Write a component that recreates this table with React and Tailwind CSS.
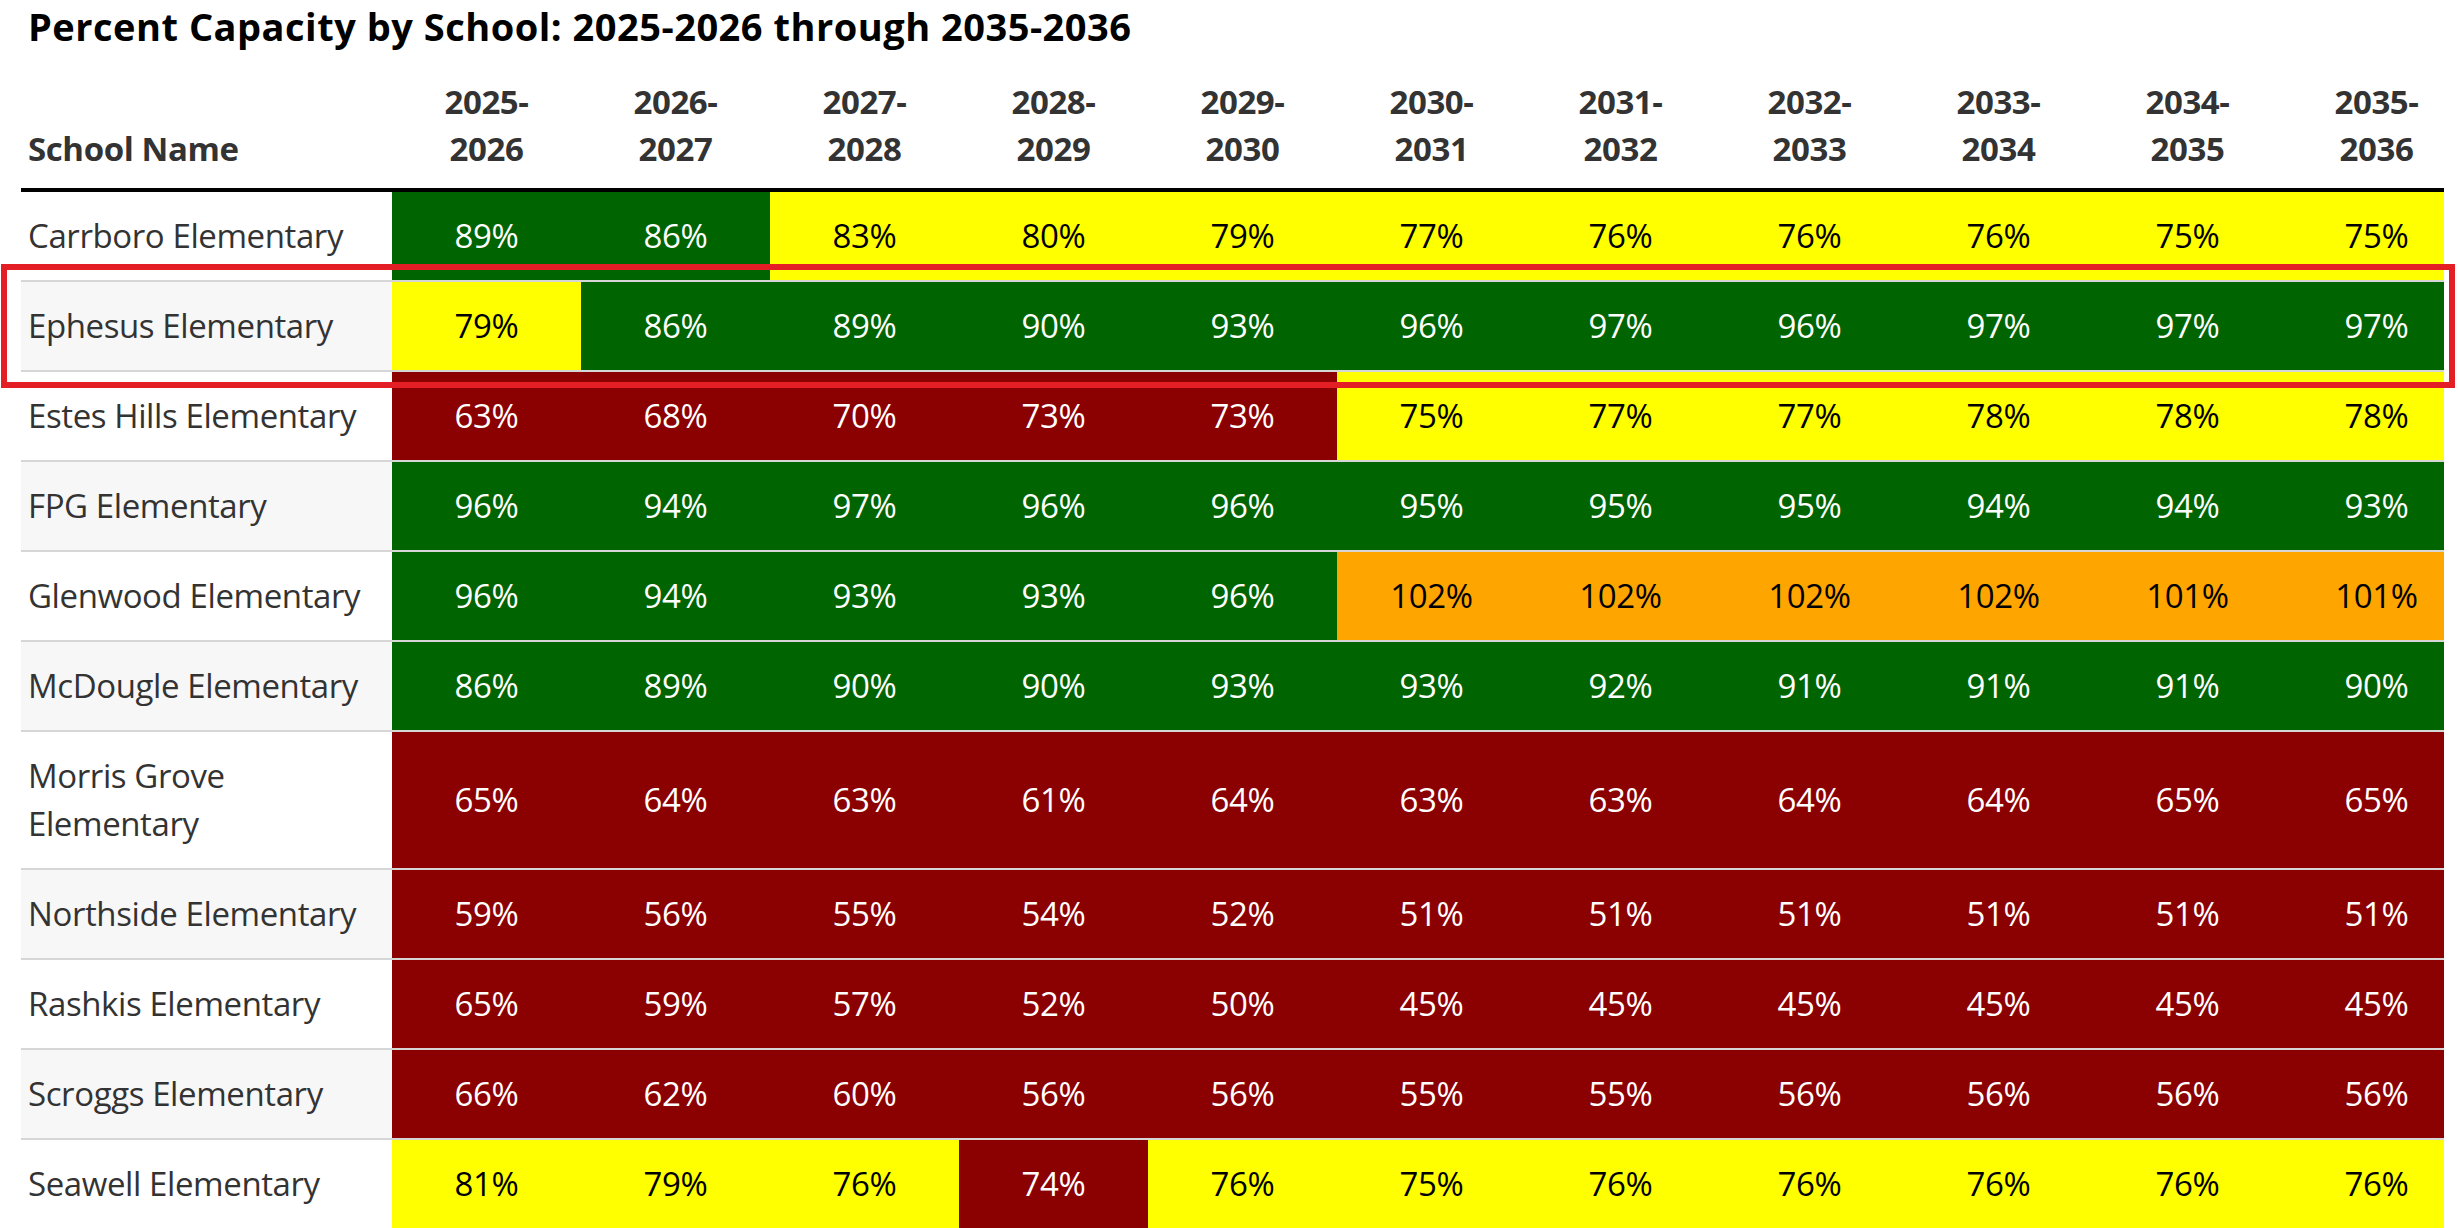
import React from "react";

const years = [
  ["2025-", "2026"],
  ["2026-", "2027"],
  ["2027-", "2028"],
  ["2028-", "2029"],
  ["2029-", "2030"],
  ["2030-", "2031"],
  ["2031-", "2032"],
  ["2032-", "2033"],
  ["2033-", "2034"],
  ["2034-", "2035"],
  ["2035-", "2036"],
];

const schools = [
  { name: "Carrboro Elementary", values: [89, 86, 83, 80, 79, 77, 76, 76, 76, 75, 75] },
  { name: "Ephesus Elementary", values: [79, 86, 89, 90, 93, 96, 97, 96, 97, 97, 97] },
  { name: "Estes Hills Elementary", values: [63, 68, 70, 73, 73, 75, 77, 77, 78, 78, 78] },
  { name: "FPG Elementary", values: [96, 94, 97, 96, 96, 95, 95, 95, 94, 94, 93] },
  { name: "Glenwood Elementary", values: [96, 94, 93, 93, 96, 102, 102, 102, 102, 101, 101] },
  { name: "McDougle Elementary", values: [86, 89, 90, 90, 93, 93, 92, 91, 91, 91, 90] },
  { name: "Morris Grove Elementary", values: [65, 64, 63, 61, 64, 63, 63, 64, 64, 65, 65] },
  { name: "Northside Elementary", values: [59, 56, 55, 54, 52, 51, 51, 51, 51, 51, 51] },
  { name: "Rashkis Elementary", values: [65, 59, 57, 52, 50, 45, 45, 45, 45, 45, 45] },
  { name: "Scroggs Elementary", values: [66, 62, 60, 56, 56, 55, 55, 56, 56, 56, 56] },
  { name: "Seawell Elementary", values: [81, 79, 76, 74, 76, 75, 76, 76, 76, 76, 76] },
];

const tones = {
  over: "bg-[#ffa500] text-black",
  good: "bg-[#006400] text-white",
  mid: "bg-[#ffff00] text-black",
  low: "bg-[#8b0000] text-white",
};

const toneFor = (v) => {
  if (v > 100) return tones.over;
  if (v >= 85) return tones.good;
  if (v >= 75) return tones.mid;
  return tones.low;
};

const App = () => {
  return (
    <div className="relative w-[2458px] h-[1228px] overflow-hidden bg-white font-['Open_Sans',sans-serif]">
      <h1 className="pl-[28px] pt-[6px] text-[38px] leading-[40px] font-bold text-black tracking-[0.5px]">
        Percent Capacity by School: 2025-2026 through 2035-2036
      </h1>

      <div className="mt-[16px] ml-[21px] w-[2423px] overflow-hidden">
        <table className="table-fixed border-separate border-spacing-0 w-[2450px]">
          <colgroup>
            <col className="w-[371px]" />
            {years.map((y) => (
              <col key={y[0]} className="w-[189px]" />
            ))}
          </colgroup>
          <thead>
            <tr>
              <th className="align-bottom text-left pl-[7px] pt-[16px] pb-[16px] text-[33px] leading-[47px] font-bold text-[#333] tracking-[-0.4px] border-b-4 border-black">
                School Name
              </th>
              {years.map((y) => (
                <th
                  key={y[0]}
                  className="align-bottom text-center pt-[16px] pb-[16px] text-[33px] leading-[47px] font-bold text-[#333] tracking-[-0.4px] border-b-4 border-black"
                >
                  {y[0]}
                  <br />
                  {y[1]}
                </th>
              ))}
            </tr>
          </thead>
          <tbody>
            {schools.map((s, i) => (
              <tr key={s.name}>
                <td
                  className={
                    "align-middle text-left pl-[7px] pr-[4px] py-[20px] text-[33px] leading-[48px] text-[#333] tracking-[-0.4px] " +
                    (i > 0 ? "border-t-2 border-[#d6d6d6] " : "") +
                    (i % 2 === 1 ? "bg-[#f7f7f7]" : "bg-white")
                  }
                >
                  {s.name}
                </td>
                {s.values.map((v, j) => (
                  <td
                    key={j}
                    className={
                      "align-middle text-center py-[20px] text-[33px] leading-[48px] tracking-[-0.4px] " +
                      (i > 0 ? "border-t-2 border-[#d6d6d6] " : "") +
                      toneFor(v)
                    }
                  >
                    {v}%
                  </td>
                ))}
              </tr>
            ))}
          </tbody>
        </table>
      </div>

      {/* highlight around Ephesus */}
      <div className="absolute left-[1px] top-[264px] w-[2454px] h-[124px] border-[6px] border-[#e31e24] pointer-events-none" />
    </div>
  );
};

export default App;
